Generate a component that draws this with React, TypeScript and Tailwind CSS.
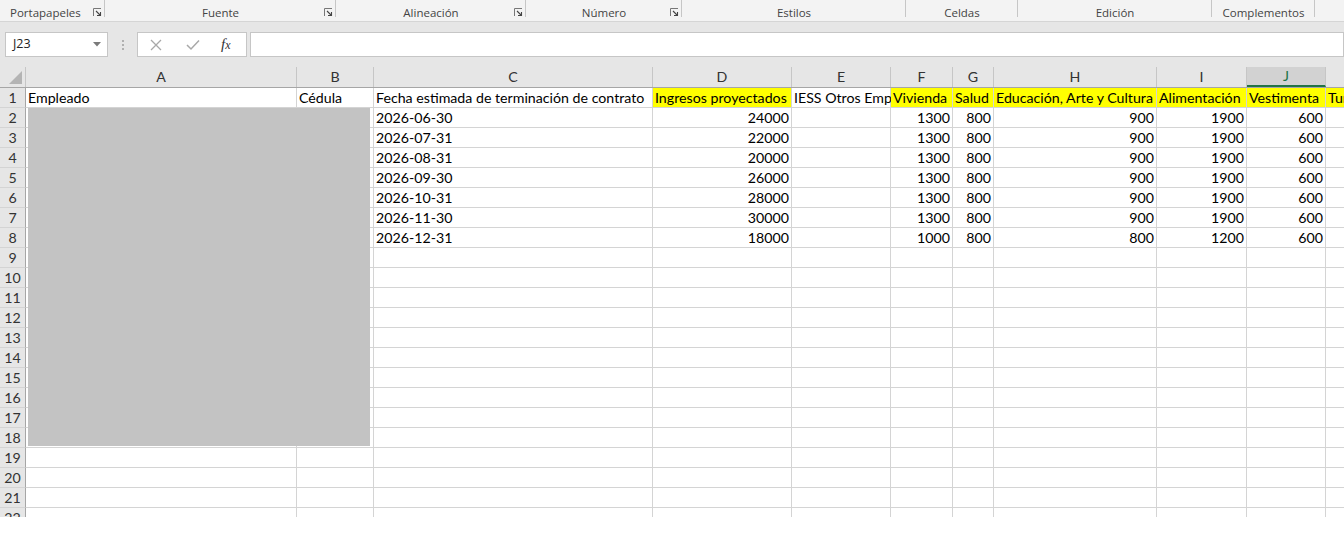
import React from "react";

const COLS = [
  { k: "A", w: 271 },
  { k: "B", w: 77 },
  { k: "C", w: 279 },
  { k: "D", w: 139 },
  { k: "E", w: 99 },
  { k: "F", w: 62 },
  { k: "G", w: 41 },
  { k: "H", w: 163 },
  { k: "I", w: 90 },
  { k: "J", w: 79 },
  { k: "K", w: 120 },
];

type Cell = { t?: string; y?: boolean; r?: boolean };

const header: Cell[] = [
  { t: "Empleado" },
  { t: "Cédula" },
  { t: "Fecha estimada de terminación de contrato" },
  { t: "Ingresos proyectados", y: true },
  { t: "IESS Otros Emp" },
  { t: "Vivienda", y: true },
  { t: "Salud", y: true },
  { t: "Educación, Arte y Cultura", y: true },
  { t: "Alimentación", y: true },
  { t: "Vestimenta", y: true },
  { t: "Turismo", y: true },
];

const data: string[][] = [
  ["2026-06-30", "24000", "1300", "800", "900", "1900", "600"],
  ["2026-07-31", "22000", "1300", "800", "900", "1900", "600"],
  ["2026-08-31", "20000", "1300", "800", "900", "1900", "600"],
  ["2026-09-30", "26000", "1300", "800", "900", "1900", "600"],
  ["2026-10-31", "28000", "1300", "800", "900", "1900", "600"],
  ["2026-11-30", "30000", "1300", "800", "900", "1900", "600"],
  ["2026-12-31", "18000", "1000", "800", "800", "1200", "600"],
];

function rowCells(i: number): Cell[] {
  if (i === 1) return header;
  const d = data[i - 2];
  if (!d) return COLS.map(() => ({}));
  return [
    {},
    {},
    { t: d[0] },
    { t: d[1], r: true },
    {},
    { t: d[2], r: true },
    { t: d[3], r: true },
    { t: d[4], r: true },
    { t: d[5], r: true },
    { t: d[6], r: true },
    {},
  ];
}

const groups = [
  { name: "Portapapeles", w: 105, launcher: true, pad: "justify-start pl-[10px]" },
  { name: "Fuente", w: 231, launcher: true },
  { name: "Alineación", w: 190, launcher: true },
  { name: "Número", w: 156, launcher: true },
  { name: "Estilos", w: 224 },
  { name: "Celdas", w: 112 },
  { name: "Edición", w: 194 },
  { name: "Complementos", w: 103 },
];

function Launcher() {
  return (
    <svg width="9" height="9" viewBox="0 0 9 9" className="absolute right-[3px] top-[8px]">
      <path d="M0.5 8 V0.5 H8" fill="none" stroke="#777" strokeWidth="1" />
      <path d="M3 3 L7.5 7.5 M7.5 4 V7.5 H4" fill="none" stroke="#444" strokeWidth="1.1" />
    </svg>
  );
}

export default function App() {
  const rows = Array.from({ length: 22 }, (_, i) => i + 1);
  return (
    <div className="w-[1344px] h-[540px] bg-white overflow-hidden" style={{ fontFamily: "Lato, 'Liberation Sans', sans-serif" }}>
      {/* Ribbon group labels */}
      <div className="h-[22px] bg-[#f3f3f3] border-b border-[#d5d5d5] flex text-[11.5px] text-[#444]" style={{ fontFamily: "'Open Sans', 'Noto Sans', sans-serif" }}>
        {groups.map((g) => (
          <div key={g.name} className="relative h-full" style={{ width: g.w }}>
            <div className={`h-[21px] flex items-end pb-0 leading-[16px] ${g.pad ? g.pad : "justify-center"}`}>{g.name}</div>
            {g.launcher && <Launcher />}
            <div className="absolute right-0 top-0 h-[17px] w-px bg-[#c6c6c6]" />
          </div>
        ))}
      </div>
      {/* Formula bar */}
      <div className="h-[45px] bg-[#e6e6e6] flex items-start pt-[10px] border-b border-[#e6e6e6]">
        <div className="ml-[5px] w-[103px] h-[25px] bg-white border border-[#c6c6c6] flex items-center justify-between pl-[7px] pr-[6px] text-[12.5px] text-[#222]" style={{ fontFamily: "'Open Sans', 'Noto Sans', sans-serif" }}>
          <span>J23</span>
          <svg width="8" height="5" viewBox="0 0 8 5"><path d="M0 0 H8 L4 4.5 Z" fill="#7a7a7a" /></svg>
        </div>
        <div className="w-[29px] h-[25px] flex flex-col items-center justify-center gap-[2px]">
          <div className="w-[2px] h-[2px] bg-[#b0b0b0]" />
          <div className="w-[2px] h-[2px] bg-[#b0b0b0]" />
          <div className="w-[2px] h-[2px] bg-[#b0b0b0]" />
        </div>
        <div className="w-[110px] h-[25px] bg-white border border-[#c6c6c6] flex items-center">
          <svg width="12" height="12" viewBox="0 0 12 12" className="ml-[12px]">
            <path d="M1 1 L11 11 M11 1 L1 11" stroke="#a8a8a8" strokeWidth="1.3" />
          </svg>
          <svg width="14" height="12" viewBox="0 0 14 12" className="ml-[24px]">
            <path d="M1 6 L5 10 L13 1.5" fill="none" stroke="#a8a8a8" strokeWidth="1.5" />
          </svg>
          <span className="ml-[21px] text-[15px] italic text-[#333] leading-none" style={{ fontFamily: "'Liberation Serif', serif" }}>
            f<span className="text-[12px]">x</span>
          </span>
        </div>
        <div className="ml-[3px] flex-1 h-[25px] bg-white border border-[#c6c6c6]" />
      </div>
      {/* Grid */}
      <div className="relative h-[450px] overflow-hidden text-[14.2px] text-black">
        {/* Column header row */}
        <div className="flex h-[21px] bg-[#e6e6e6] border-b border-[#a6a6a6]">
          <div className="w-[26px] h-full border-r border-[#c6c6c6] relative flex-none">
            <svg width="13" height="13" viewBox="0 0 13 13" className="absolute right-[3px] bottom-[3px]">
              <path d="M13 0 V13 H0 Z" fill="#b4b4b4" />
            </svg>
          </div>
          {COLS.map((c) => (
            <div
              key={c.k}
              className={`flex-none h-full flex items-center justify-center border-r border-[#c6c6c6] ${c.k === "J" ? "bg-[#d2d2d2] text-[#217346] border-b-2 border-b-[#217346]" : "text-[#333]"}`}
              style={{ width: c.w }}
            >
              {c.k !== "K" ? c.k : ""}
            </div>
          ))}
        </div>
        {rows.map((r) => {
          const cells = rowCells(r);
          return (
            <div key={r} className="flex h-[20px]">
              <div className="flex-none w-[26px] h-full bg-[#e6e6e6] border-r border-[#a6a6a6] border-b border-b-[#d4d4d4] flex items-center justify-center pt-[1px] text-[#333]">
                {r}
              </div>
              {COLS.map((c, ci) => {
                const cell = cells[ci];
                return (
                  <div
                    key={c.k}
                    className={`flex-none h-full border-r border-b border-[#d4d4d4] flex items-center pt-[1px] overflow-visible whitespace-nowrap ${cell.r ? "justify-end pr-[2px]" : "pl-[2px]"} ${cell.y ? "bg-[#ffff00]" : ""}`}
                    style={{ width: c.w }}
                  >
                    {cell.t}
                  </div>
                );
              })}
            </div>
          );
        })}
        {/* redacted block */}
        <div className="absolute left-[28px] top-[41px] w-[342px] h-[338px] bg-[#c3c3c3]" />
      </div>
    </div>
  );
}
